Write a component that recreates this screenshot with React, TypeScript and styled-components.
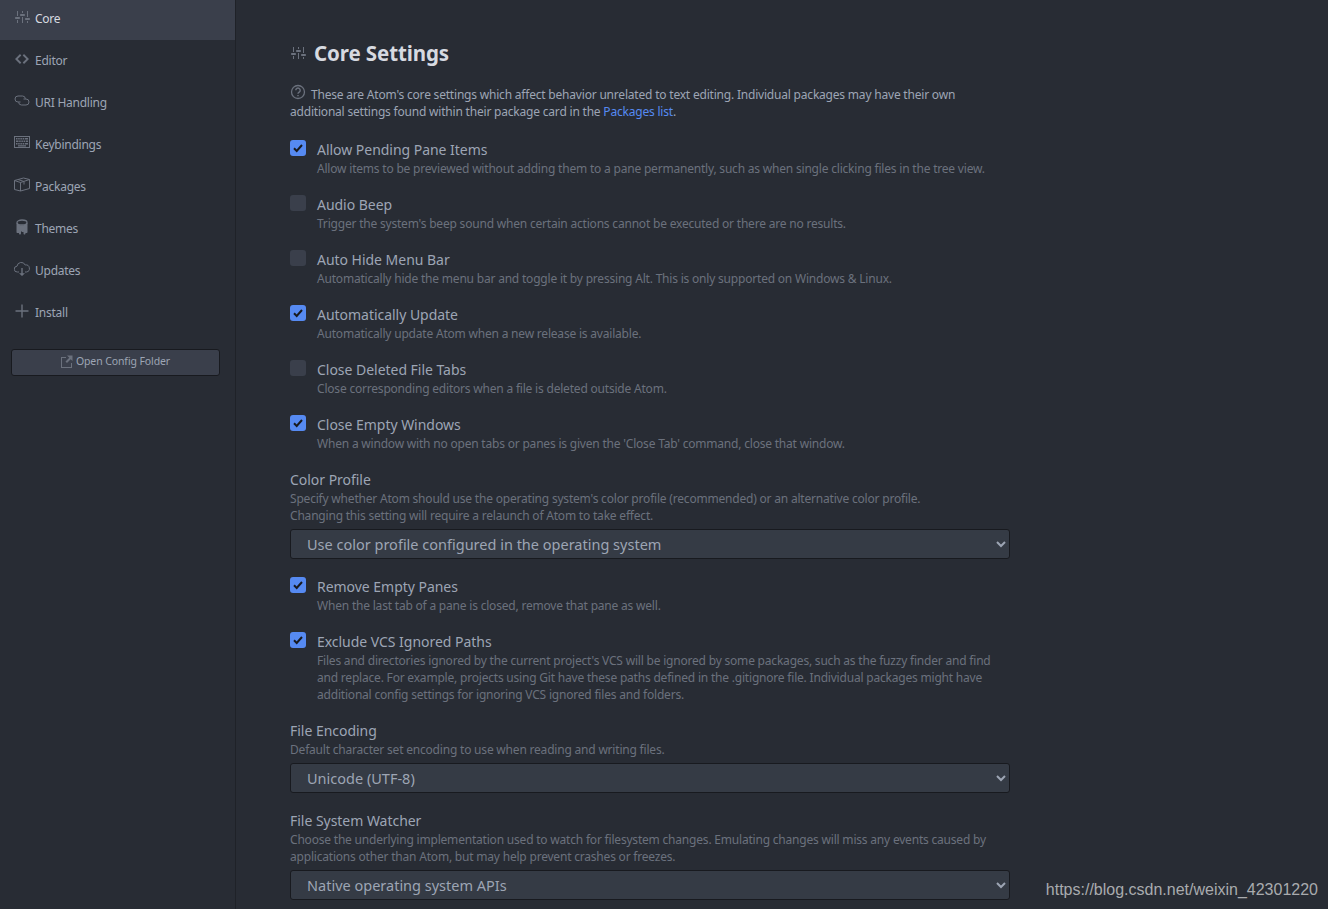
import styled, { createGlobalStyle } from 'styled-components';
import { ReactNode } from 'react';

const GlobalStyle = createGlobalStyle`
  html, body {
    margin: 0;
    height: 100%;
    overflow: hidden;
    background: #282c34;
  }
  * {
    box-sizing: border-box;
  }
`;

const Page = styled.div`
  display: flex;
  width: 1328px;
  height: 909px;
  overflow: hidden;
  position: relative;
  background: #282c34;
  color: #9da5b4;
  font-family: 'Noto Sans', sans-serif;
`;

const Sidebar = styled.nav`
  width: 236px;
  flex-shrink: 0;
  border-right: 1px solid #1f2228;
`;

const Menu = styled.ul`
  list-style: none;
  margin: -2px 0 0;
  padding: 0;
`;

const MenuItem = styled.li<{ active?: boolean }>`
  height: 42px;
  display: flex;
  align-items: center;
  padding: 0 0 2px 14px;
  font-size: 12px;
  letter-spacing: -0.25px;
  background: ${(props) => (props.active ? '#3a3f4b' : 'transparent')};
  color: ${(props) => (props.active ? '#d7dae0' : '#9da5b4')};
`;

const MenuIcon = styled.span`
  width: 21px;
  height: 16px;
  margin-top: -3px;
  flex-shrink: 0;
  display: flex;
  color: #6b717d;
`;

const ConfigButton = styled.button`
  display: flex;
  align-items: center;
  justify-content: center;
  gap: 3px;
  width: 209px;
  height: 27px;
  margin: 15px 0 0 11px;
  padding: 0 0 3px;
  background: #3a3f4b;
  border: 1px solid #181a1f;
  border-radius: 3px;
  color: #9da5b4;
  font-family: inherit;
  font-size: 10.5px;
  letter-spacing: -0.1px;
`;

const ConfigIcon = styled.span`
  display: flex;
  color: #6b717d;
`;

const Main = styled.main`
  width: 720px;
  margin-left: 54px;
  padding-top: 38px;
`;

const Heading = styled.h1`
  display: flex;
  align-items: center;
  gap: 8px;
  height: 26px;
  margin: 0 0 20px;
  padding-top: 4px;
  font-size: 20.5px;
  font-weight: 700;
  letter-spacing: -0.1px;
  color: #d7dae0;
`;

const HeadingIcon = styled.span`
  display: flex;
  color: #6b717d;
`;

const Intro = styled.p`
  margin: 0 0 20px;
  width: 680px;
  font-size: 12px;
  line-height: 17px;
  letter-spacing: -0.2px;
`;

const HelpIcon = styled.svg`
  width: 16px;
  height: 16px;
  margin-right: 5px;
  vertical-align: -1px;
  color: #6b717d;
`;

const Link = styled.a`
  color: #568af2;
`;

const Setting = styled.section`
  margin-bottom: 18px;
`;

const CheckRow = styled.div`
  display: flex;
  gap: 11px;
`;

const Box = styled.span<{ checked: boolean }>`
  width: 16px;
  height: 16px;
  flex-shrink: 0;
  display: flex;
  align-items: center;
  justify-content: center;
  border-radius: 3px;
  background: ${(props) => (props.checked ? '#568af2' : '#3a3f4b')};
`;

const Title = styled.div`
  height: 20px;
  font-size: 14px;
  line-height: 20px;
  letter-spacing: -0.03px;
`;

const Description = styled.div`
  font-size: 12px;
  line-height: 17px;
  letter-spacing: -0.2px;
  color: #6b717d;
`;

const Select = styled.select`
  display: block;
  width: 720px;
  height: 30px;
  margin-top: 5px;
  padding: 0 0 0 12px;
  background: #353b45;
  border: 1px solid #181a1f;
  border-radius: 3px;
  color: #9da5b4;
  font-family: inherit;
  font-size: 14.5px;
`;

const Watermark = styled.span`
  position: absolute;
  right: 10px;
  top: 880px;
  font-family: 'Liberation Sans', sans-serif;
  font-size: 16px;
  line-height: 20px;
  color: #a9abae;
`;

const Glyph = ({ children, w = 16 }: { children: ReactNode; w?: number }) => (
  <svg width={w} height="16" viewBox={`0 0 ${w} 16`} fill="currentColor">
    {children}
  </svg>
);

const SettingsIcon = () => (
  <Glyph>
    <path d="M4 7H3V2h1v5zm-1 7h1v-3H3v3zm5 0h1V8H8v6zm5 0h1v-2h-1v2zm1-12h-1v6h1V2zM9 2H8v2h1V2zM5 8H2c-.55 0-1 .45-1 1s.45 1 1 1h3c.55 0 1-.45 1-1s-.45-1-1-1zm5-3H7c-.55 0-1 .45-1 1s.45 1 1 1h3c.55 0 1-.45 1-1s-.45-1-1-1zm5 4h-3c-.55 0-1 .45-1 1s.45 1 1 1h3c.55 0 1-.45 1-1s-.45-1-1-1z" />
  </Glyph>
);

const CodeIcon = () => (
  <Glyph>
    <path d="M10 3L8.700 4.400 12.300 8l-3.600 3.600L10 13l5-5-5-5zM6 3L1 8l5 5 1.300-1.400L3.700 8l3.600-3.600L6 3z" />
  </Glyph>
);

const LinkIcon = () => (
  <Glyph>
    <g fill="none" stroke="currentColor">
      <path d="M6.500 9H4a3 3 0 0 1 0-6h4.500a3 3 0 0 1 2.900 2.600" />
      <path d="M9.500 6H12a3 3 0 0 1 0 6H7.500a3 3 0 0 1-2.900-2.600" />
    </g>
  </Glyph>
);

const KeyboardIcon = () => (
  <Glyph>
    <rect x="0.5" y="1.500" width="15" height="11" fill="none" stroke="currentColor" />
    <path d="M2 3h1.500v1.500H2zm2.200 0h1.500v1.500H4.200zm2.200 0h1.500v1.500H6.400zm2.200 0h1.500v1.500H8.600zm2.200 0H14v1.500h-3.200zM2 5.500h2.500V7H2zm3.200 0h1.500V7H5.200zm2.200 0h1.500V7H7.400zm2.200 0h1.500V7H9.600zm2.200 0H14V7h-2.200zM2 8h1.500v1.500H2zm2.200 0h1.500v1.500H4.200zm2.200 0h1.500v1.500H6.400zm2.200 0h1.500v1.500H8.600zm2.200 0H14v1.500h-3.200zM4 10.300h8v1.200H4z" />
  </Glyph>
);

const PackageIcon = () => (
  <Glyph>
    <g fill="none" stroke="currentColor">
      <path d="M.5 3.500l9-2.500 6 1.500v9l-9 2.500-6-1.500z" />
      <path d="M.5 3.500l6 2v8.500M6.500 5.500l9-3M4 2.500l6 2v3" />
    </g>
  </Glyph>
);

const PaintcanIcon = () => (
  <Glyph>
    <ellipse cx="8" cy="3.500" rx="5" ry="2.500" fill="none" stroke="currentColor" strokeWidth="1.300" />
    <path d="M2.500 4h1.200c.4 1.500 2 2.300 4.300 2.300s3.900-.8 4.300-2.300h1.200v9c0 .6-.4 1-1 1h-1v.5c0 .5-.4 1-1 1s-1-.5-1-1V13H8v-.5H7v2c0 .5-.4 1-1 1s-1-.5-1-1V14H3.500c-.6 0-1-.4-1-1z" />
  </Glyph>
);

const CloudDownloadIcon = () => (
  <Glyph>
    <path
      d="M5 11H3.300a2.900 2.900 0 0 1-.3-5.800A4.300 4.300 0 0 1 11.200 4a3.500 3.500 0 0 1 1.300 7H11"
      fill="none"
      stroke="currentColor"
    />
    <path d="M7.300 7h1.400v5.200H11L8 15l-3-2.800h2.300z" />
  </Glyph>
);

const PlusIcon = () => (
  <Glyph>
    <path d="M7.300 1.500h1.400v5.800h5.800v1.400H8.700v5.800H7.300V8.700H1.500V7.300h5.800z" />
  </Glyph>
);

const ExternalIcon = () => (
  <Glyph w={12}>
    <path d="M0 4h5v1H1v9h9v-4h1v5H0zM6 2.500h5.500V8L9.700 6.200 6 10 4.500 8.500l3.800-3.800z" />
  </Glyph>
);

const menu = [
  { label: 'Core', icon: <SettingsIcon />, active: true },
  { label: 'Editor', icon: <CodeIcon /> },
  { label: 'URI Handling', icon: <LinkIcon /> },
  { label: 'Keybindings', icon: <KeyboardIcon /> },
  { label: 'Packages', icon: <PackageIcon /> },
  { label: 'Themes', icon: <PaintcanIcon /> },
  { label: 'Updates', icon: <CloudDownloadIcon /> },
  { label: 'Install', icon: <PlusIcon /> },
];

type Row =
  | { kind: 'check'; title: string; desc: ReactNode; checked: boolean }
  | { kind: 'select'; title: string; desc: ReactNode; value: string };

const rows: Row[] = [
  {
    kind: 'check',
    title: 'Allow Pending Pane Items',
    desc: 'Allow items to be previewed without adding them to a pane permanently, such as when single clicking files in the tree view.',
    checked: true,
  },
  {
    kind: 'check',
    title: 'Audio Beep',
    desc: "Trigger the system's beep sound when certain actions cannot be executed or there are no results.",
    checked: false,
  },
  {
    kind: 'check',
    title: 'Auto Hide Menu Bar',
    desc: 'Automatically hide the menu bar and toggle it by pressing Alt. This is only supported on Windows & Linux.',
    checked: false,
  },
  {
    kind: 'check',
    title: 'Automatically Update',
    desc: 'Automatically update Atom when a new release is available.',
    checked: true,
  },
  {
    kind: 'check',
    title: 'Close Deleted File Tabs',
    desc: 'Close corresponding editors when a file is deleted outside Atom.',
    checked: false,
  },
  {
    kind: 'check',
    title: 'Close Empty Windows',
    desc: "When a window with no open tabs or panes is given the 'Close Tab' command, close that window.",
    checked: true,
  },
  {
    kind: 'select',
    title: 'Color Profile',
    desc: (
      <>
        Specify whether Atom should use the operating system's color profile (recommended) or an alternative color profile.
        <br />
        Changing this setting will require a relaunch of Atom to take effect.
      </>
    ),
    value: 'Use color profile configured in the operating system',
  },
  {
    kind: 'check',
    title: 'Remove Empty Panes',
    desc: 'When the last tab of a pane is closed, remove that pane as well.',
    checked: true,
  },
  {
    kind: 'check',
    title: 'Exclude VCS Ignored Paths',
    desc: (
      <>
        Files and directories ignored by the current project's VCS will be ignored by some packages, such as the fuzzy finder and find
        <br />
        and replace. For example, projects using Git have these paths defined in the .gitignore file. Individual packages might have
        <br />
        additional config settings for ignoring VCS ignored files and folders.
      </>
    ),
    checked: true,
  },
  {
    kind: 'select',
    title: 'File Encoding',
    desc: 'Default character set encoding to use when reading and writing files.',
    value: 'Unicode (UTF-8)',
  },
  {
    kind: 'select',
    title: 'File System Watcher',
    desc: (
      <>
        Choose the underlying implementation used to watch for filesystem changes. Emulating changes will miss any events caused by
        <br />
        applications other than Atom, but may help prevent crashes or freezes.
      </>
    ),
    value: 'Native operating system APIs',
  },
];

function App() {
  return (
    <Page>
      <GlobalStyle />
      <Sidebar>
        <Menu>
          {menu.map((item) => (
            <MenuItem key={item.label} active={item.active}>
              <MenuIcon>{item.icon}</MenuIcon>
              {item.label}
            </MenuItem>
          ))}
        </Menu>
        <ConfigButton>
          <ConfigIcon>
            <ExternalIcon />
          </ConfigIcon>
          Open Config Folder
        </ConfigButton>
      </Sidebar>
      <Main>
        <Heading>
          <HeadingIcon>
            <SettingsIcon />
          </HeadingIcon>
          Core Settings
        </Heading>
        <Intro>
          <HelpIcon viewBox="0 0 16 16" fill="none" stroke="currentColor">
            <circle cx="8" cy="8" r="6.500" strokeWidth="1.300" />
            <path d="M5.800 6.300a2.200 2.200 0 1 1 3.400 1.800c-.8.500-1.200.9-1.200 1.700" strokeWidth="1.400" />
            <path d="M8 11v1.300" strokeWidth="1.400" />
          </HelpIcon>
          These are Atom's core settings which affect behavior unrelated to text editing. Individual packages may have their own
          additional settings found within their package card in the <Link>Packages list</Link>.
        </Intro>
        {rows.map((row) =>
          row.kind === 'check' ? (
            <Setting key={row.title}>
              <CheckRow>
                <Box checked={row.checked}>
                  {row.checked && (
                    <svg width="12" height="12" viewBox="0 0 12 12" fill="none" stroke="#181a1f" strokeWidth="2">
                      <path d="M2 6.300l2.700 2.700L10 3" />
                    </svg>
                  )}
                </Box>
                <div>
                  <Title>{row.title}</Title>
                  <Description>{row.desc}</Description>
                </div>
              </CheckRow>
            </Setting>
          ) : (
            <Setting key={row.title}>
              <Title>{row.title}</Title>
              <Description>{row.desc}</Description>
              <Select defaultValue={row.value}>
                <option>{row.value}</option>
              </Select>
            </Setting>
          ),
        )}
      </Main>
      <Watermark>https://blog.csdn.net/weixin_42301220</Watermark>
    </Page>
  );
}

export default App;
